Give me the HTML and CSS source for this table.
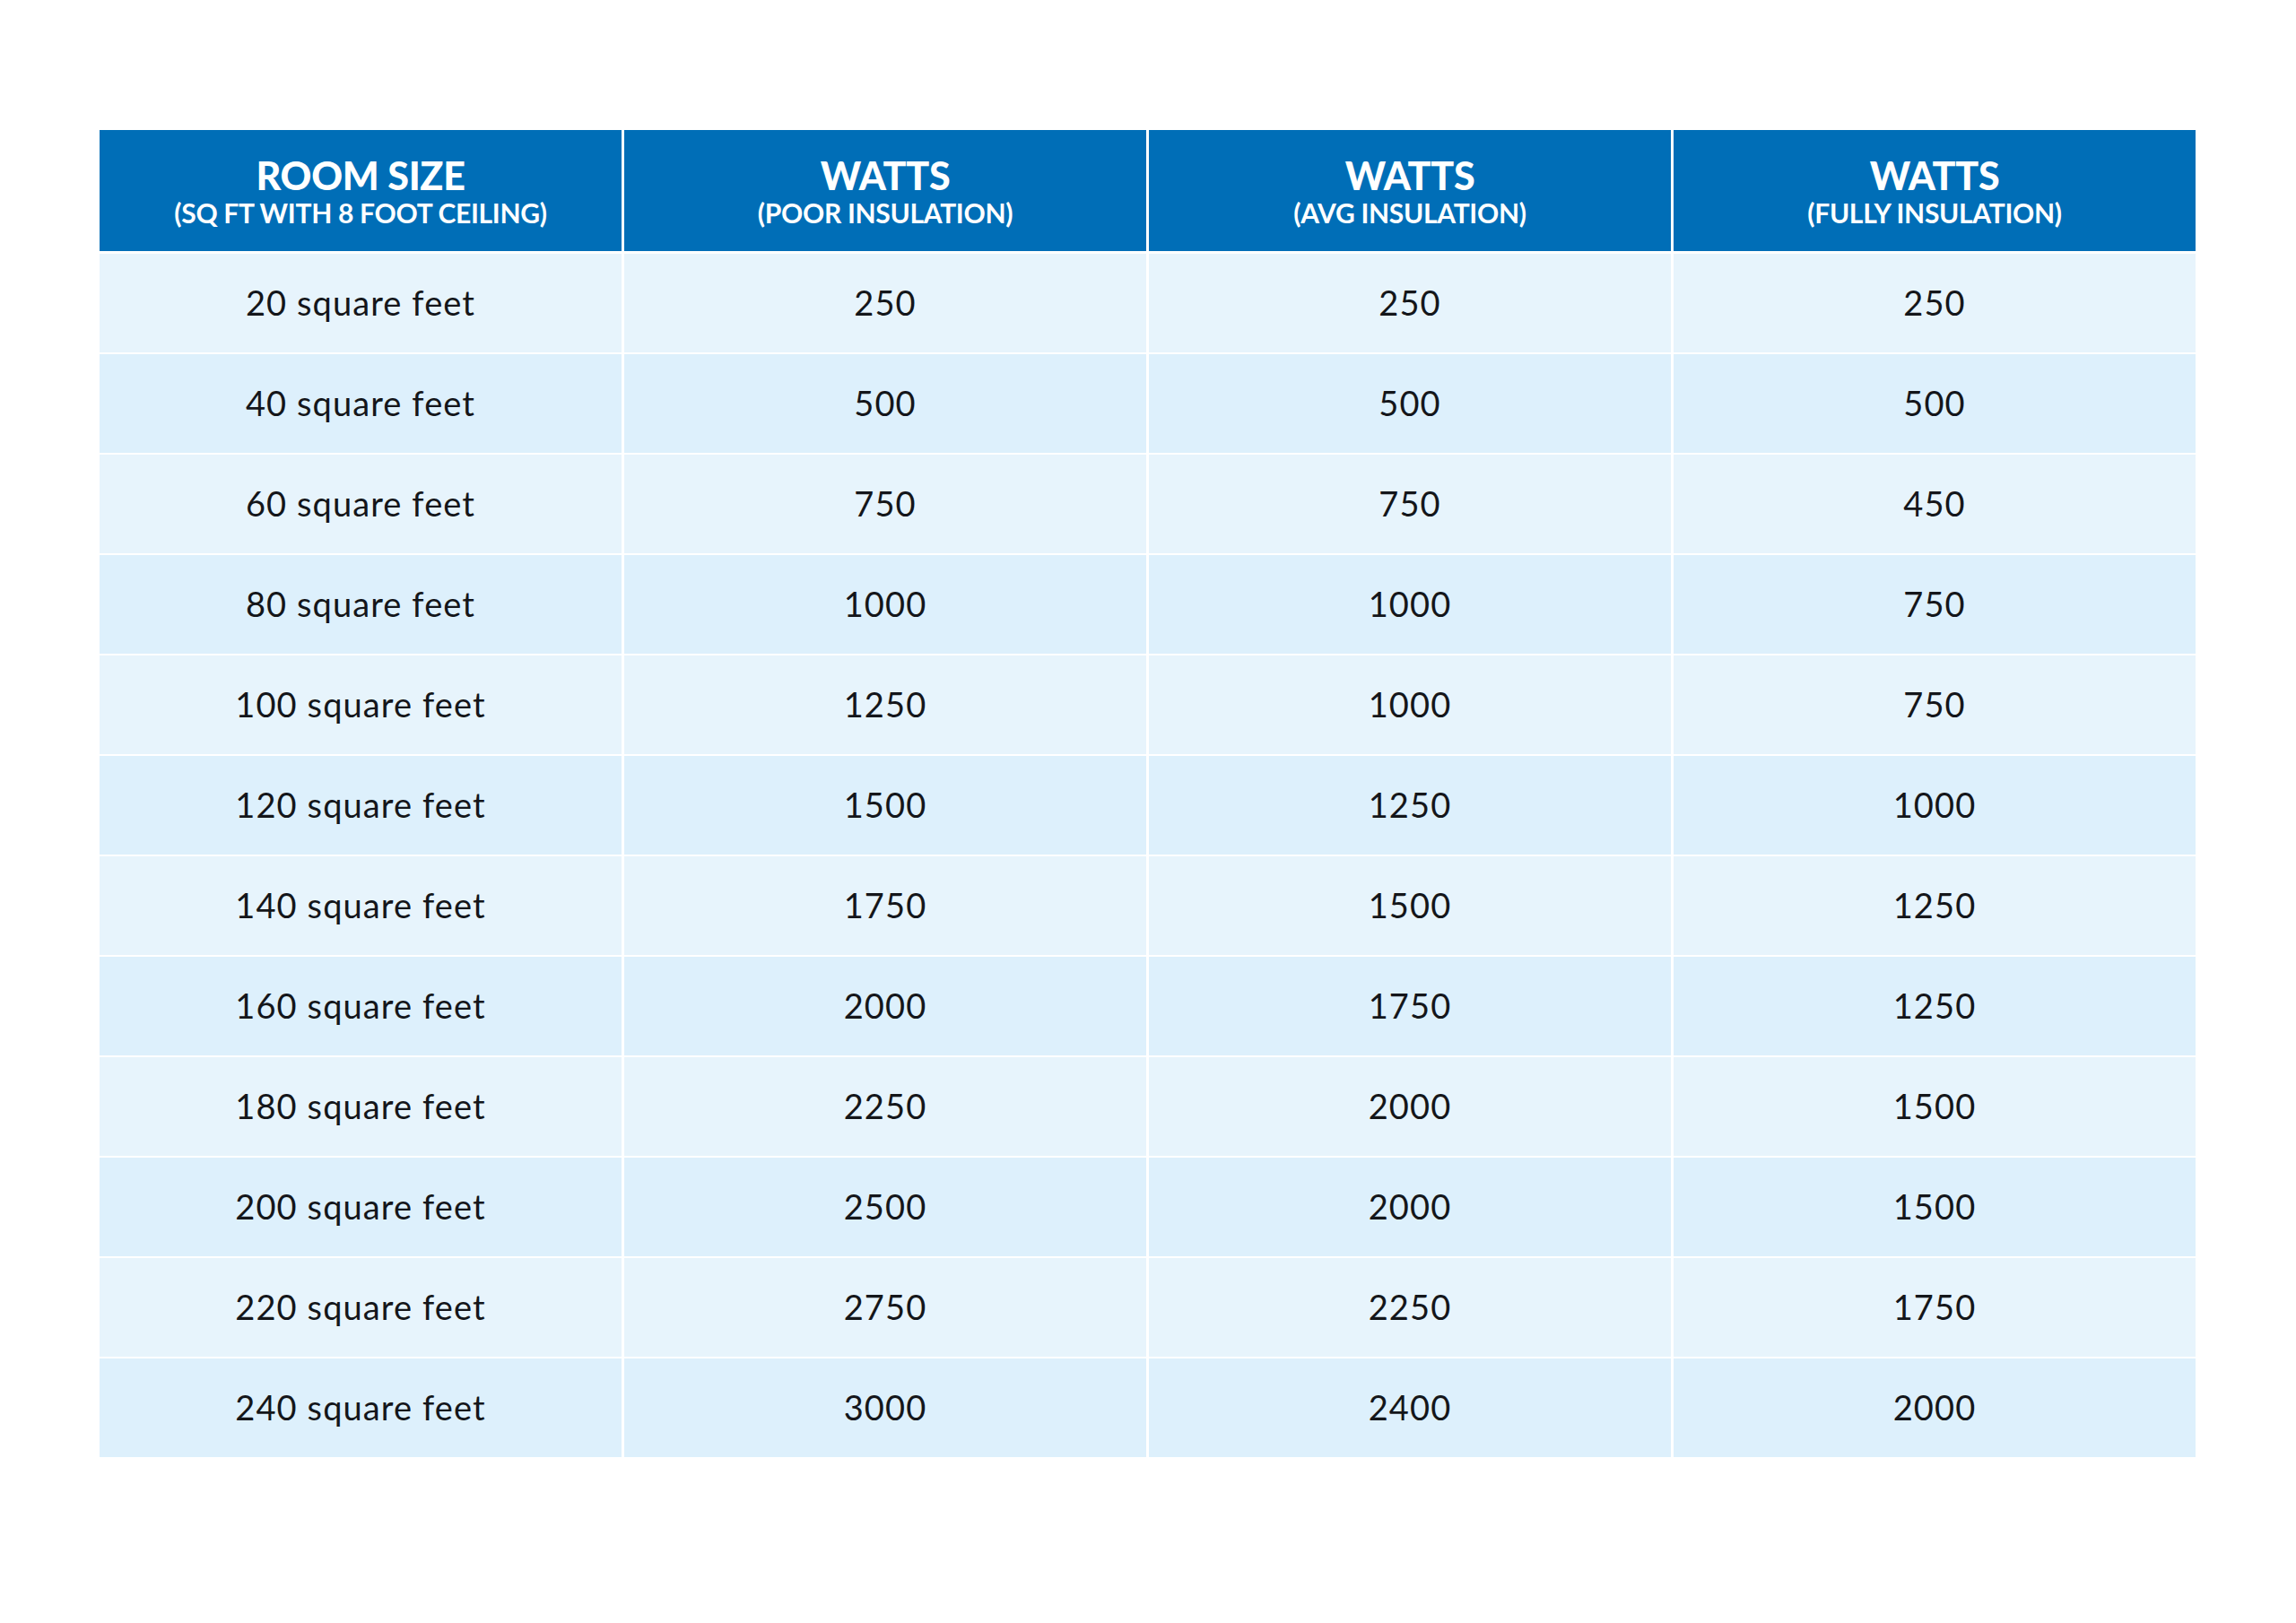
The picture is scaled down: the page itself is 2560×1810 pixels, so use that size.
FILE: index.html
```html
<!DOCTYPE html>
<html lang="en">
<head>
<meta charset="utf-8">
<title>Room size wattage chart</title>
<link rel="stylesheet" href="styles.css">
</head>
<body>
<div class="chart">
  <div class="head"><span class="t">ROOM SIZE</span><span class="s">(SQ FT WITH 8 FOOT CEILING)</span></div>
  <div class="head"><span class="t">WATTS</span><span class="s">(POOR INSULATION)</span></div>
  <div class="head"><span class="t">WATTS</span><span class="s">(AVG INSULATION)</span></div>
  <div class="head"><span class="t">WATTS</span><span class="s">(FULLY INSULATION)</span></div>

  <div class="cell a">20 square feet</div><div class="cell a">250</div><div class="cell a">250</div><div class="cell a">250</div>
  <div class="cell b">40 square feet</div><div class="cell b">500</div><div class="cell b">500</div><div class="cell b">500</div>
  <div class="cell a">60 square feet</div><div class="cell a">750</div><div class="cell a">750</div><div class="cell a">450</div>
  <div class="cell b">80 square feet</div><div class="cell b">1000</div><div class="cell b">1000</div><div class="cell b">750</div>
  <div class="cell a">100 square feet</div><div class="cell a">1250</div><div class="cell a">1000</div><div class="cell a">750</div>
  <div class="cell b">120 square feet</div><div class="cell b">1500</div><div class="cell b">1250</div><div class="cell b">1000</div>
  <div class="cell a">140 square feet</div><div class="cell a">1750</div><div class="cell a">1500</div><div class="cell a">1250</div>
  <div class="cell b">160 square feet</div><div class="cell b">2000</div><div class="cell b">1750</div><div class="cell b">1250</div>
  <div class="cell a">180 square feet</div><div class="cell a">2250</div><div class="cell a">2000</div><div class="cell a">1500</div>
  <div class="cell b">200 square feet</div><div class="cell b">2500</div><div class="cell b">2000</div><div class="cell b">1500</div>
  <div class="cell a">220 square feet</div><div class="cell a">2750</div><div class="cell a">2250</div><div class="cell a">1750</div>
  <div class="cell b">240 square feet</div><div class="cell b">3000</div><div class="cell b">2400</div><div class="cell b">2000</div>
</div>
</body>
</html>
```

FILE: styles.css
```css
html, body {
  margin: 0;
  padding: 0;
  background: #ffffff;
}
body {
  font-family: "Lato", "Noto Sans", sans-serif;
  color: #14161a;
}
.chart {
  width: 2337px;
  margin: 145px 0 0 111px;
  display: grid;
  grid-template-columns: repeat(4, 1fr);
  grid-template-rows: 136px repeat(12, 110px);
  column-gap: 3px;
  row-gap: 2px;
  background: #ffffff;
}
.chart > .head:nth-child(-n+4) {
  margin-bottom: 1px;
}
.head {
  background: #006eb7;
  color: #ffffff;
  display: flex;
  flex-direction: column;
  align-items: center;
  justify-content: center;
  padding-top: 6px;
}
.head .t {
  font-weight: 900;
  font-size: 43px;
  line-height: 42px;
  letter-spacing: -0.3px;
}
.head .s {
  font-weight: 700;
  font-size: 30px;
  line-height: 40px;
  letter-spacing: -0.3px;
}
.cell {
  display: flex;
  align-items: center;
  justify-content: center;
  font-size: 38px;
  font-weight: 400;
  letter-spacing: 1.1px;
  padding-bottom: 2px;
}
.cell.a { background: #e7f4fc; }
.cell.b { background: #ddf0fc; }
```
